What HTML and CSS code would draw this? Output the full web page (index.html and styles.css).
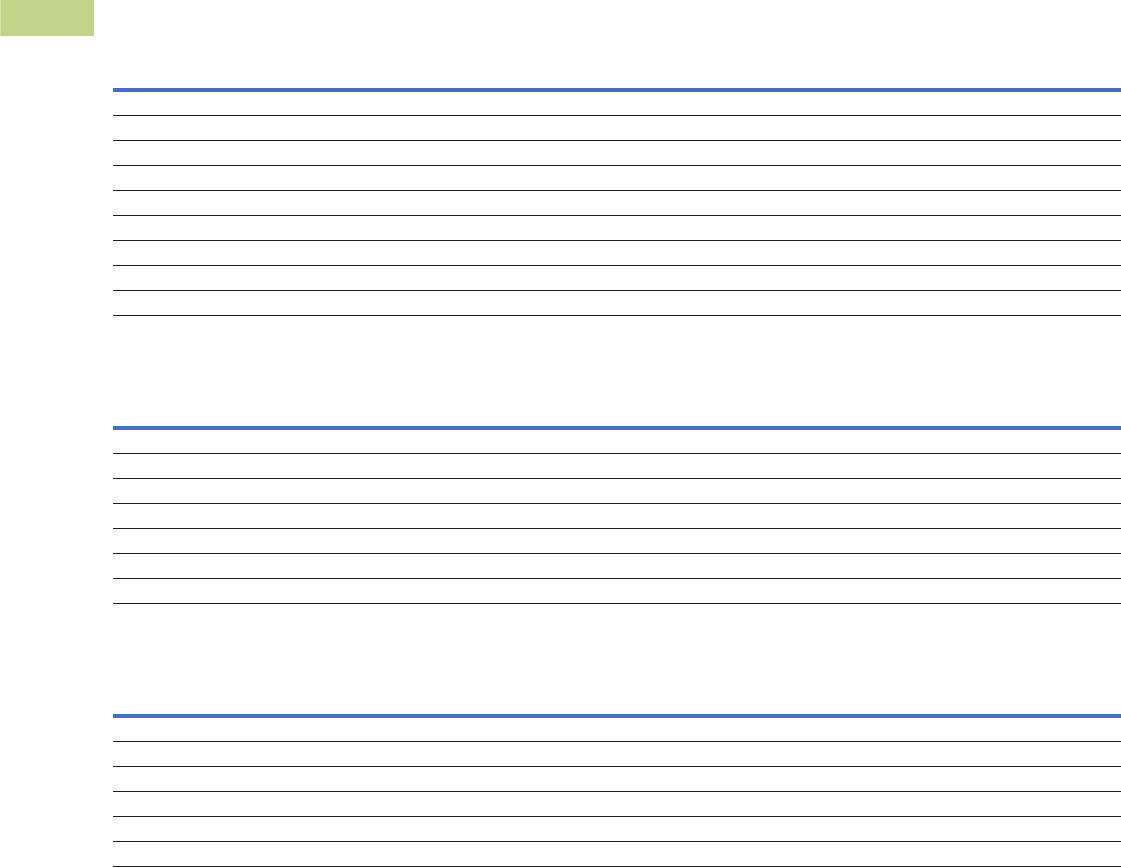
FILE: index.html
```html
<!DOCTYPE html>
<html lang="en">
<head>
<meta charset="utf-8">
<title>Sheet</title>
<link rel="stylesheet" href="styles.css">
</head>
<body>
<div class="page">
  <div class="tag"></div>
  <div class="sheet">
    <div class="row"></div><div class="row"></div><div class="row"></div>
    <div class="row"></div><div class="row"></div><div class="row"></div>
    <div class="row"></div><div class="row"></div><div class="row"></div>
  </div>
  <div class="sheet">
    <div class="row"></div><div class="row"></div><div class="row"></div>
    <div class="row"></div><div class="row"></div><div class="row"></div>
    <div class="row"></div>
  </div>
  <div class="sheet">
    <div class="row"></div><div class="row"></div><div class="row"></div>
    <div class="row"></div><div class="row"></div><div class="row"></div>
  </div>
</div>
</body>
</html>
```
FILE: styles.css
```css
html, body {
  margin: 0;
  padding: 0;
  background: #ffffff;
  font-family: "Liberation Sans", Arial, sans-serif;
}
.page {
  display: flex;
  flex-direction: column;
  width: 1121px;
  height: 867px;
  overflow: hidden;
}
.tag {
  width: 93px;
  height: 36px;
  background: #c0d588;
  border-left: 1px solid #d3e2ae;
  flex: none;
}
.sheet {
  margin-left: 113px;
  margin-top: 110px;
  border-top: 4px solid #4a6dbd;
  display: flex;
  flex-direction: column;
  flex: none;
}
.tag + .sheet {
  margin-top: 52px;
}
.row {
  height: 24px;
  border-bottom: 1px solid #1c1c1c;
  flex: none;
}
.row:first-child {
  height: 23px;
}
```
